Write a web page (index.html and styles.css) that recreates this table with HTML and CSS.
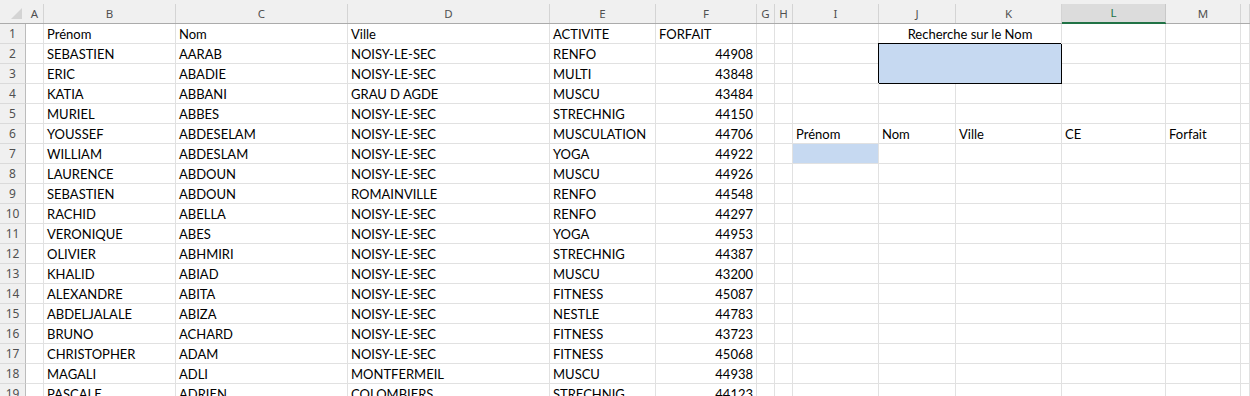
FILE: index.html
```html
<!DOCTYPE html>
<html lang="fr">
<head>
<meta charset="utf-8">
<title>Feuille</title>
<link rel="stylesheet" href="styles.css">
</head>
<body>
<div class="sheet">
  <div class="corner"><svg width="26" height="24" viewBox="0 0 26 24"><polygon points="22,9 22,20 11,20" fill="#d4d4d4"/></svg></div>
  <div class="ch"><span>A</span></div><div class="ch"><span>B</span></div><div class="ch"><span>C</span></div><div class="ch"><span>D</span></div><div class="ch"><span>E</span></div><div class="ch"><span>F</span></div><div class="ch"><span>G</span></div><div class="ch"><span>H</span></div><div class="ch"><span>I</span></div><div class="ch"><span>J</span></div><div class="ch"><span>K</span></div><div class="ch sel"><span>L</span></div><div class="ch"><span>M</span></div><div class="ch"><span></span></div>

  <div class="rh">1</div><div></div><div>Prénom</div><div>Nom</div><div>Ville</div><div>ACTIVITE</div><div>FORFAIT</div><div></div><div></div><div></div><div class="m2 ctr">Recherche sur le Nom</div><div></div><div></div><div></div>
  <div class="rh">2</div><div></div><div>SEBASTIEN</div><div>AARAB</div><div>NOISY-LE-SEC</div><div>RENFO</div><div class="n">44908</div><div></div><div></div><div></div><div class="box"></div><div></div><div></div><div></div>
  <div class="rh">3</div><div></div><div>ERIC</div><div>ABADIE</div><div>NOISY-LE-SEC</div><div>MULTI</div><div class="n">43848</div><div></div><div></div><div></div><div></div><div></div><div></div>
  <div class="rh">4</div><div></div><div>KATIA</div><div>ABBANI</div><div>GRAU D AGDE</div><div>MUSCU</div><div class="n">43484</div><div></div><div></div><div></div><div></div><div></div><div></div><div></div><div></div>
  <div class="rh">5</div><div></div><div>MURIEL</div><div>ABBES</div><div>NOISY-LE-SEC</div><div>STRECHNIG</div><div class="n">44150</div><div></div><div></div><div></div><div></div><div></div><div></div><div></div><div></div>
  <div class="rh">6</div><div></div><div>YOUSSEF</div><div>ABDESELAM</div><div>NOISY-LE-SEC</div><div>MUSCULATION</div><div class="n">44706</div><div></div><div></div><div>Prénom</div><div>Nom</div><div>Ville</div><div>CE</div><div>Forfait</div><div></div>
  <div class="rh">7</div><div></div><div>WILLIAM</div><div>ABDESLAM</div><div>NOISY-LE-SEC</div><div>YOGA</div><div class="n">44922</div><div></div><div></div><div class="fill"></div><div></div><div></div><div></div><div></div><div></div>
  <div class="rh">8</div><div></div><div>LAURENCE</div><div>ABDOUN</div><div>NOISY-LE-SEC</div><div>MUSCU</div><div class="n">44926</div><div></div><div></div><div></div><div></div><div></div><div></div><div></div><div></div>
  <div class="rh">9</div><div></div><div>SEBASTIEN</div><div>ABDOUN</div><div>ROMAINVILLE</div><div>RENFO</div><div class="n">44548</div><div></div><div></div><div></div><div></div><div></div><div></div><div></div><div></div>
  <div class="rh">10</div><div></div><div>RACHID</div><div>ABELLA</div><div>NOISY-LE-SEC</div><div>RENFO</div><div class="n">44297</div><div></div><div></div><div></div><div></div><div></div><div></div><div></div><div></div>
  <div class="rh">11</div><div></div><div>VERONIQUE</div><div>ABES</div><div>NOISY-LE-SEC</div><div>YOGA</div><div class="n">44953</div><div></div><div></div><div></div><div></div><div></div><div></div><div></div><div></div>
  <div class="rh">12</div><div></div><div>OLIVIER</div><div>ABHMIRI</div><div>NOISY-LE-SEC</div><div>STRECHNIG</div><div class="n">44387</div><div></div><div></div><div></div><div></div><div></div><div></div><div></div><div></div>
  <div class="rh">13</div><div></div><div>KHALID</div><div>ABIAD</div><div>NOISY-LE-SEC</div><div>MUSCU</div><div class="n">43200</div><div></div><div></div><div></div><div></div><div></div><div></div><div></div><div></div>
  <div class="rh">14</div><div></div><div>ALEXANDRE</div><div>ABITA</div><div>NOISY-LE-SEC</div><div>FITNESS</div><div class="n">45087</div><div></div><div></div><div></div><div></div><div></div><div></div><div></div><div></div>
  <div class="rh">15</div><div></div><div>ABDELJALALE</div><div>ABIZA</div><div>NOISY-LE-SEC</div><div>NESTLE</div><div class="n">44783</div><div></div><div></div><div></div><div></div><div></div><div></div><div></div><div></div>
  <div class="rh">16</div><div></div><div>BRUNO</div><div>ACHARD</div><div>NOISY-LE-SEC</div><div>FITNESS</div><div class="n">43723</div><div></div><div></div><div></div><div></div><div></div><div></div><div></div><div></div>
  <div class="rh">17</div><div></div><div>CHRISTOPHER</div><div>ADAM</div><div>NOISY-LE-SEC</div><div>FITNESS</div><div class="n">45068</div><div></div><div></div><div></div><div></div><div></div><div></div><div></div><div></div>
  <div class="rh">18</div><div></div><div>MAGALI</div><div>ADLI</div><div>MONTFERMEIL</div><div>MUSCU</div><div class="n">44938</div><div></div><div></div><div></div><div></div><div></div><div></div><div></div><div></div>
  <div class="rh">19</div><div></div><div>PASCALE</div><div>ADRIEN</div><div>COLOMBIERS</div><div>STRECHNIG</div><div class="n">44123</div><div></div><div></div><div></div><div></div><div></div><div></div><div></div><div></div>
</div>
</body>
</html>
```
FILE: styles.css
```css
html, body {
  margin: 0;
  padding: 0;
  background: #ffffff;
  overflow: hidden;
}

.sheet {
  display: grid;
  grid-template-columns: 26px 18px 132px 172px 202px 106px 101px 18px 18px 86px 77px 106px 104px 75px 1fr;
  grid-template-rows: 24px repeat(19, 20px);
  width: 1250px;
  height: 404px;
  font-family: Lato, "Liberation Sans", sans-serif;
  font-size: 13px;
  color: #000;
}

.sheet > div {
  box-sizing: border-box;
  border-right: 1px solid #e1e1e1;
  border-bottom: 1px solid #e1e1e1;
  padding: 0 3px 1px 3px;
  display: flex;
  align-items: flex-end;
  line-height: 16px;
  white-space: nowrap;
  overflow: hidden;
}

.sheet > div.n {
  justify-content: flex-end;
  padding-right: 3px;
}

.sheet > div.ctr {
  justify-content: center;
}

.sheet > div.m2 {
  grid-column: span 2;
}

.sheet > div.box {
  grid-column: span 2;
  grid-row: span 2;
  background: #c6d9f1;
  border-right: 1px solid #000;
  border-bottom: 1px solid #000;
  box-shadow: -1px -1px 0 0 #000;
  z-index: 1;
}

.sheet > div.fill {
  background: #c6d9f1;
}

.sheet > div.corner {
  padding: 0;
  background: #f0f0f0;
  border-right: none;
  border-bottom: 1px solid #ababab;
  overflow: visible;
}

.corner svg {
  display: block;
}

.sheet > div.ch {
  padding: 4px 0 0 0;
  background: #f0f0f0;
  border-right: none;
  border-bottom: 1px solid #ababab;
  align-items: stretch;
  font-family: "Noto Sans", "Open Sans", sans-serif;
  font-size: 11.5px;
  color: #505050;
}

.ch span {
  flex: 1;
  display: flex;
  align-items: center;
  justify-content: center;
  border-left: 1px solid #d4d4d4;
  margin-left: -1px;
}

.sheet > div.ch:nth-child(2) span {
  margin-left: 0;
  border-left: none;
}

.ch + .ch span {
  margin-left: 0;
}

.ch span {
  border-left: none;
  border-right: 1px solid #d4d4d4;
}

.sheet > div.ch.sel {
  border-bottom-color: #217346;
}

.ch.sel span {
  background: #dcdcdc;
  color: #217346;
  border-bottom: 1px solid #217346;
  border-right-color: #c8c8c8;
}

.sheet > div.rh {
  padding: 0;
  background: #f0f0f0;
  border-right: 1px solid #bcbcbc;
  border-bottom: 1px solid #dadada;
  justify-content: center;
  align-items: center;
  font-family: "Noto Sans", "Open Sans", sans-serif;
  font-size: 12px;
  color: #505050;
}
```
